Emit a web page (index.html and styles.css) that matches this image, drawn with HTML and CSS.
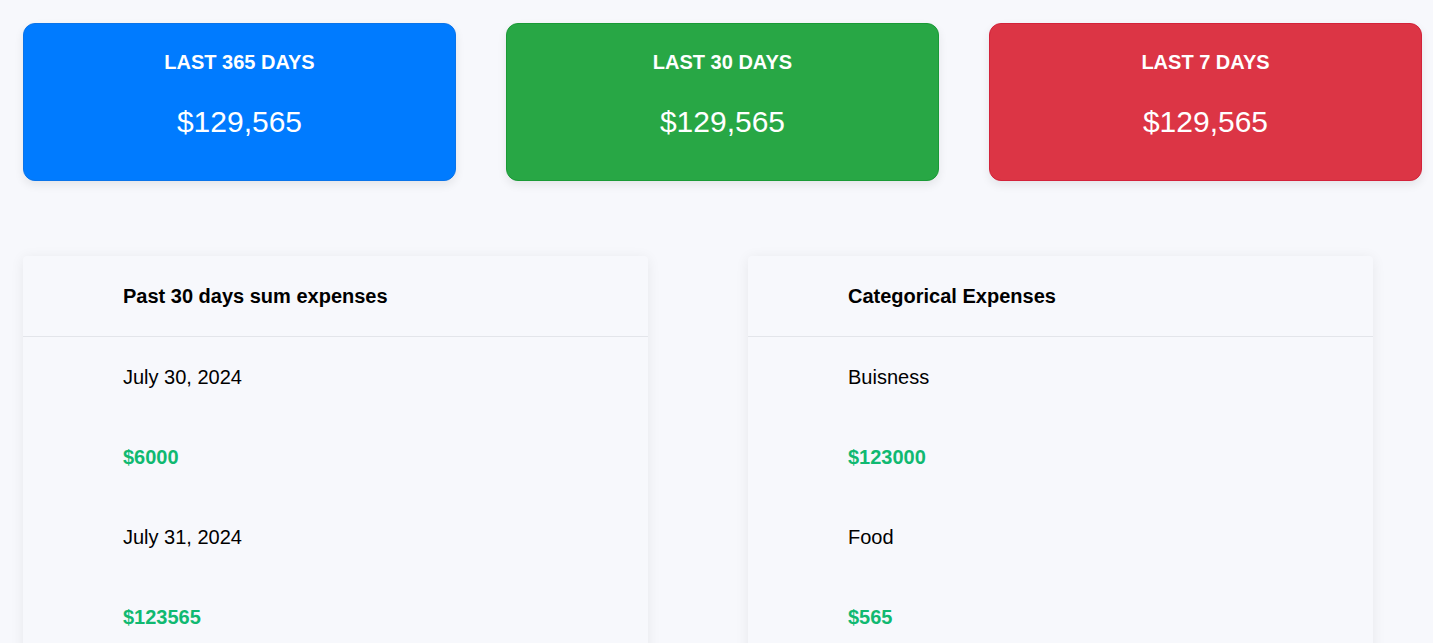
FILE: index.html
```html
<!DOCTYPE html>
<html>
<head>
<meta charset="utf-8">
<link rel="stylesheet" href="styles.css">
</head>
<body>
<div class="page">
  <div class="stats">
    <div class="stat stat-blue">
      <div class="stat-title">LAST 365 DAYS</div>
      <div class="stat-value">$129,565</div>
    </div>
    <div class="stat stat-green">
      <div class="stat-title">LAST 30 DAYS</div>
      <div class="stat-value">$129,565</div>
    </div>
    <div class="stat stat-red">
      <div class="stat-title">LAST 7 DAYS</div>
      <div class="stat-value">$129,565</div>
    </div>
  </div>
  <div class="panels">
    <div class="panel">
      <div class="panel-head">Past 30 days sum expenses</div>
      <div class="row">July 30, 2024</div>
      <div class="row amount">$6000</div>
      <div class="row">July 31, 2024</div>
      <div class="row amount">$123565</div>
    </div>
    <div class="panel">
      <div class="panel-head">Categorical Expenses</div>
      <div class="row">Buisness</div>
      <div class="row amount">$123000</div>
      <div class="row">Food</div>
      <div class="row amount">$565</div>
    </div>
  </div>
</div>
</body>
</html>
```
FILE: styles.css
```css
html, body {
  margin: 0;
  padding: 0;
  background: #f7f8fc;
  font-family: "Liberation Sans", Arial, sans-serif;
  color: #000;
}
.page {
  padding: 23px 11px 0 23px;
}
.stats {
  display: grid;
  grid-template-columns: 433px 433px 433px;
  column-gap: 50px;
}
.stat {
  box-sizing: border-box;
  height: 158px;
  border-radius: 12px;
  border: 1px solid transparent;
  color: #fff;
  display: flex;
  flex-direction: column;
  align-items: center;
  padding-top: 27px;
  box-shadow: 0 4px 10px rgba(0, 0, 0, 0.08);
}
.stat-blue { background: #007bff; border-color: #0a74ea; }
.stat-green { background: #28a745; border-color: #1a9a36; }
.stat-red { background: #dc3545; border-color: #d3223a; }
.stat-title {
  font-size: 20px;
  font-weight: bold;
  line-height: 23px;
}
.stat-value {
  margin-top: 30px;
  font-size: 30px;
  line-height: 35px;
}
.panels {
  margin-top: 75px;
  display: grid;
  grid-template-columns: 625px 625px;
  column-gap: 100px;
}
.panel {
  background: #f7f8fc;
  border-radius: 4px 4px 0 0;
  box-shadow: 0 2px 14px rgba(0, 0, 0, 0.07);
  height: 420px;
}
.panel-head {
  padding: 28px 100px;
  font-size: 20px;
  font-weight: bold;
  line-height: 24px;
  border-bottom: 1px solid #e3e5ea;
}
.row {
  padding: 28px 100px;
  font-size: 20px;
  line-height: 24px;
}
.amount {
  color: #10b971;
  font-weight: bold;
}
```
